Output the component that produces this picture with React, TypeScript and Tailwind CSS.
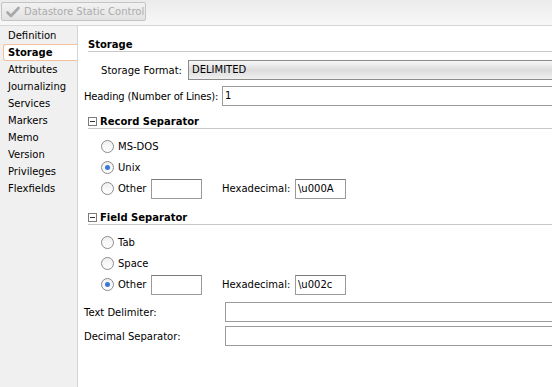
import React from "react"

const font = { fontFamily: '"DejaVu Sans", Verdana, sans-serif' }

const tabs = ["Definition", "Storage", "Attributes", "Journalizing", "Services", "Markers", "Memo", "Version", "Privileges", "Flexfields"]

function Radio({ checked, label }: { checked?: boolean; label: string }) {
  return (
    <div className="flex items-center gap-[4px]">
      <span className="flex h-[13px] w-[13px] items-center justify-center rounded-full border border-[#8a8a8a] bg-gradient-to-b from-[#f0f0f0] to-white">
        {checked && <span className="h-[5px] w-[5px] rounded-full bg-[#3a78d8]" />}
      </span>
      <span>{label}</span>
    </div>
  )
}

function Field({ w, value }: { w: string; value?: string }) {
  return (
    <div className={`h-[20px] ${w} border border-[#9a9a9a] border-t-[#7a7a7a] bg-white px-[2px] leading-[18px]`}>{value}</div>
  )
}

function Section({ title }: { title: string }) {
  return (
    <div className="flex h-[14px] items-center gap-[3px] border-b border-[#c8c8cc] font-bold">
      <span className="flex h-[9px] w-[9px] items-center justify-center border border-[#7a7a7a] bg-white">
        <span className="h-px w-[5px] bg-[#333]" />
      </span>
      <span>{title}</span>
    </div>
  )
}

function OtherRow({ checked, hex }: { checked?: boolean; hex: string }) {
  return (
    <div className="flex h-[21px] items-center">
      <div className="w-[50px]"><Radio checked={checked} label="Other" /></div>
      <Field w="w-[51px]" />
      <span className="ml-[20px] w-[73px]">Hexadecimal:</span>
      <Field w="w-[51px]" value={hex} />
    </div>
  )
}

export default function App() {
  return (
    <div className="flex h-[387px] w-[552px] flex-col overflow-hidden bg-white text-[10px] text-black" style={font}>
      <div className="flex h-[26px] shrink-0 items-start border-b border-[#d6d6d6] bg-gradient-to-b from-[#ebebeb] to-[#f8f8f8] px-[1px] pt-[2px]">
        <div className="flex h-[19px] w-[145px] items-center gap-[4px] whitespace-nowrap rounded-[2px] border border-[#c4c4c4] bg-gradient-to-b from-[#f2f2f2] to-[#e2e2e2] px-[4px] text-[#ababab]">
          <svg width="14" height="12" viewBox="0 0 14 12" className="shrink-0">
            <path d="M1.5 6.5 L5 10 L12.5 2" fill="none" stroke="#a8a8a8" strokeWidth="2.6" strokeLinecap="round" strokeLinejoin="round" />
          </svg>
          <span>Datastore Static Control</span>
        </div>
      </div>
      <div className="flex flex-1">
        <div className="flex w-[77px] shrink-0 flex-col bg-[#f0f0f0] pt-[1px]">
          {tabs.map((t) =>
            t === "Storage" ? (
              <div key={t} className="ml-[3px] h-[17px] rounded-l-[3px] border border-r-0 border-[#f3c19e] bg-white pl-[4px] font-bold leading-[15px]">{t}</div>
            ) : (
              <div key={t} className="h-[17px] pl-[8px] leading-[17px]">{t}</div>
            )
          )}
        </div>
        <div className="flex-1 border-l border-[#d4d4d4] bg-white pt-[12px]">
          <div className="pl-[10px]">
            <div className="h-[14px] border-b border-[#c8c8cc] font-bold leading-[13px]">Storage</div>
          </div>
          <div className="mt-[8px] flex h-[20px] items-center">
            <span className="w-[104px] text-right">Storage Format:</span>
            <div className="ml-[6px] h-[20px] flex-1 border border-r-0 border-[#8c8c8c] bg-gradient-to-b from-[#f8f8f8] via-[#dcdcdc] to-[#f0f0f0] pl-[3px] leading-[18px]">DELIMITED</div>
          </div>
          <div className="mt-[6px] flex h-[20px] items-center pl-[6px]">
            <span className="w-[138px] whitespace-nowrap tracking-[-0.15px]">Heading (Number of Lines):</span>
            <div className="h-[20px] flex-1 border border-r-0 border-[#9a9a9a] bg-white px-[2px] leading-[18px]">1</div>
          </div>
          <div className="mt-[9px] pl-[10px]"><Section title="Record Separator" /></div>
          <div className="mt-[7px] flex flex-col pl-[23px]">
            <div className="flex h-[21px] items-center"><Radio label="MS-DOS" /></div>
            <div className="flex h-[21px] items-center"><Radio checked label="Unix" /></div>
            <OtherRow hex="\u000A" />
          </div>
          <div className="mt-[12px] pl-[10px]"><Section title="Field Separator" /></div>
          <div className="mt-[7px] flex flex-col pl-[23px]">
            <div className="flex h-[21px] items-center"><Radio label="Tab" /></div>
            <div className="flex h-[21px] items-center"><Radio label="Space" /></div>
            <OtherRow checked hex="\u002c" />
          </div>
          <div className="mt-[7px] flex h-[20px] items-center pl-[6px]">
            <span className="w-[141px]">Text Delimiter:</span>
            <div className="h-[20px] flex-1 border border-r-0 border-[#9a9a9a] bg-white" />
          </div>
          <div className="mt-[4px] flex h-[20px] items-center pl-[6px]">
            <span className="w-[141px]">Decimal Separator:</span>
            <div className="h-[20px] flex-1 border border-r-0 border-[#9a9a9a] bg-white" />
          </div>
        </div>
      </div>
    </div>
  )
}
